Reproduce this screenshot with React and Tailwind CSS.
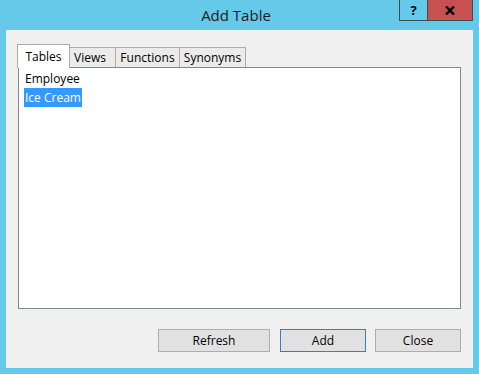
import { useState } from "react";

const tabs = ["Tables", "Views", "Functions", "Synonyms"];
const tabStyles = {
  Tables: "w-[53px] justify-center",
  Views: "w-[47px] justify-start pl-[4px]",
  Functions: "w-[65px] justify-center",
  Synonyms: "w-[67px] justify-center",
};

export default function App() {
  const [tab, setTab] = useState("Tables");
  const [selected, setSelected] = useState("Ice Cream");

  return (
    <div
      className="w-[479px] h-[374px] bg-[#65c9ea] flex flex-col text-black"
      style={{ fontFamily: '"Segoe UI", "Open Sans", "Noto Sans", sans-serif' }}
    >
      {/* Title bar */}
      <div className="h-[30px] flex items-start">
        <div className="flex-1 h-[30px] flex items-center justify-center pl-[73px] text-[15px] text-[#1c1c1c]">
          Add Table
        </div>
        <div className="flex h-[21px] mr-[6px] border border-t-0 border-[#3d4a52]">
          <button className="w-[27px] h-full flex items-center justify-center text-[13px] font-bold leading-none">
            ?
          </button>
          <button className="w-[45px] h-full bg-[#c75050] border-l border-[#3d4a52] flex items-center justify-center">
            <svg width="10" height="9" viewBox="0 0 10 9">
              <path d="M1 0.5 L9 8.5 M9 0.5 L1 8.5" stroke="#000" strokeWidth="2.4" />
            </svg>
          </button>
        </div>
      </div>

      {/* Client area */}
      <div className="flex-1 mx-[6px] mb-[6px] bg-[#f0f0f0] flex flex-col pt-[13px] pl-[11px] pr-[12px] pb-[16px]">
        <div className="flex items-end h-[24px] relative z-10">
          {tabs.map((t) =>
            t === tab ? (
              <div
                key={t}
                onClick={() => setTab(t)}
                className={`${tabStyles[t]} h-[24px] -mb-px bg-white border border-b-0 border-[#acacac] text-[12px] flex items-start pt-[3px]`}
              >
                {t}
              </div>
            ) : (
              <div
                key={t}
                onClick={() => setTab(t)}
                className={`${tabStyles[t]} h-[20px] -ml-px bg-[#ebebeb] border border-b-0 border-[#acacac] text-[12px] flex items-center`}
              >
                {t}
              </div>
            )
          )}
        </div>
        <div className="ml-px h-[242px] bg-white border border-[#828790] pt-[1px] pl-[5px] text-[12px]">
          {["Employee", "Ice Cream"].map((r) => (
            <div key={r} className="h-[19px] flex">
              <span
                onClick={() => setSelected(r)}
                className={`px-[1px] flex items-center ${
                  selected === r ? "bg-[#3399ff] text-white" : ""
                }`}
              >
                {r}
              </span>
            </div>
          ))}
        </div>
        <div className="flex-1" />
        <div className="flex justify-end text-[12px]">
          <button className="w-[112px] h-[23px] bg-[#e1e1e1] border border-[#adadad]">Refresh</button>
          <button className="w-[86px] h-[23px] ml-[10px] bg-[#e1e1e1] border border-[#3c7fb1]">Add</button>
          <button className="w-[86px] h-[23px] ml-[9px] bg-[#e1e1e1] border border-[#adadad]">Close</button>
        </div>
      </div>
    </div>
  );
}
